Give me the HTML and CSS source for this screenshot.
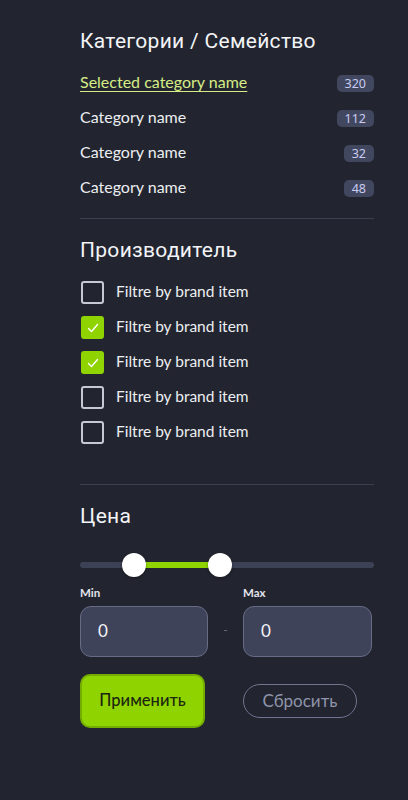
FILE: index.html
```html
<!DOCTYPE html>
<html lang="ru">
<head>
<meta charset="utf-8">
<title>Фильтр</title>
<link rel="stylesheet" href="styles.css">
</head>
<body>
<aside class="panel">
  <section class="section">
    <h2 class="heading">Категории / Семейство</h2>
    <ul class="cats">
      <li class="cat"><a class="cat-name selected" href="#">Selected category name</a><span class="badge">320</span></li>
      <li class="cat"><span class="cat-name">Category name</span><span class="badge">112</span></li>
      <li class="cat"><span class="cat-name">Category name</span><span class="badge">32</span></li>
      <li class="cat"><span class="cat-name">Category name</span><span class="badge">48</span></li>
    </ul>
  </section>
  <hr class="sep sep-1">
  <section class="section">
    <h2 class="heading">Производитель</h2>
    <ul class="brands">
      <li class="brand"><span class="box"></span><span class="brand-name">Filtre by brand item</span></li>
      <li class="brand"><span class="box checked"><svg viewBox="0 0 22 22" width="22" height="22"><path d="M6.5 11.5 L9.5 14.5 L15.5 7.5" fill="none" stroke="#ffffff" stroke-width="1.4" stroke-linecap="round" stroke-linejoin="round"/></svg></span><span class="brand-name">Filtre by brand item</span></li>
      <li class="brand"><span class="box checked"><svg viewBox="0 0 22 22" width="22" height="22"><path d="M6.5 11.5 L9.5 14.5 L15.5 7.5" fill="none" stroke="#ffffff" stroke-width="1.4" stroke-linecap="round" stroke-linejoin="round"/></svg></span><span class="brand-name">Filtre by brand item</span></li>
      <li class="brand"><span class="box"></span><span class="brand-name">Filtre by brand item</span></li>
      <li class="brand"><span class="box"></span><span class="brand-name">Filtre by brand item</span></li>
    </ul>
  </section>
  <hr class="sep sep-2">
  <section class="section">
    <h2 class="heading">Цена</h2>
    <div class="slider">
      <div class="track"></div>
      <div class="range" style="left:54px;width:86px"></div>
      <span class="thumb" style="left:42px"></span>
      <span class="thumb" style="left:128px"></span>
    </div>
    <div class="price-grid">
      <label class="lbl">Min</label>
      <span></span>
      <label class="lbl">Max</label>
      <div class="input">0</div>
      <span class="dash">-</span>
      <div class="input">0</div>
    </div>
    <div class="actions">
      <button class="btn-apply">Применить</button>
      <button class="btn-reset">Сбросить</button>
    </div>
  </section>
</aside>
</body>
</html>
```

FILE: styles.css
```css
* { box-sizing: border-box; }
html, body {
  margin: 0;
  padding: 0;
  background: #22252f;
}
body {
  width: 408px;
  height: 800px;
  font-family: Lato, "Noto Sans", sans-serif;
  color: #eceef2;
}
.panel {
  padding: 28px 34px 0 80px;
}
.heading {
  margin: 0;
  font-family: Roboto, "Noto Sans", sans-serif;
  font-weight: 400;
  font-size: 21px;
  line-height: 26px;
  letter-spacing: 0.3px;
  color: #f3f4f7;
}
ul { list-style: none; margin: 0; padding: 0; }
.cats { margin-top: 12px; }
.cat {
  height: 35px;
  display: flex;
  align-items: center;
  justify-content: space-between;
}
.cat-name {
  font-size: 16px;
  line-height: 20px;
  padding-bottom: 3px;
  color: #eceef2;
  text-decoration: none;
}
.cat-name.selected {
  color: #d6ec86;
  text-decoration: underline;
  text-underline-offset: 3px;
  text-decoration-thickness: 1px;
}
.badge {
  height: 17px;
  padding: 0 8px;
  border-radius: 5px;
  background: #424760;
  color: #c9cbf2;
  font-family: "Noto Sans", sans-serif;
  font-size: 12.5px;
  line-height: 17px;
}
.sep {
  border: 0;
  height: 1px;
  background: #3b3f50;
  margin: 0;
}
.sep-1 { margin-top: 12px; margin-bottom: 18px; }
.sep-2 { margin-top: 34px; margin-bottom: 18px; }
.brands { margin-top: 12px; }
.brand {
  height: 35px;
  display: flex;
  align-items: center;
  gap: 12px;
  padding-left: 1px;
}
.box {
  width: 23px;
  height: 23px;
  border: 2px solid #c6c8d4;
  border-radius: 3px;
  flex: none;
  display: flex;
  align-items: center;
  justify-content: center;
}
.box.checked {
  background: #8fd400;
  border-color: #8fd400;
}
.box svg { flex: none; }
.brand-name {
  font-size: 15.5px;
  line-height: 20px;
  padding-bottom: 3px;
  color: #eceef2;
}
.slider {
  position: relative;
  height: 24px;
  margin-top: 24px;
}
.track {
  position: absolute;
  left: 0;
  right: 0;
  top: 9px;
  height: 6px;
  border-radius: 3px;
  background: #3d4155;
}
.range {
  position: absolute;
  top: 9px;
  height: 6px;
  background: #8fd400;
}
.thumb {
  position: absolute;
  top: 0;
  width: 24px;
  height: 24px;
  border-radius: 50%;
  background: #ffffff;
  box-shadow: 0 1px 3px rgba(0,0,0,0.35);
}
.price-grid {
  margin-top: 9px;
  display: grid;
  grid-template-columns: 128px 35px 129px;
  grid-template-rows: 14px 51px;
  row-gap: 6px;
  align-items: center;
}
.lbl {
  font-size: 11.5px;
  line-height: 14px;
  font-weight: 700;
  color: #e4e6ec;
}
.input {
  height: 51px;
  border: 1px solid #676c86;
  border-radius: 11px;
  background: #3f4359;
  padding-left: 17px;
  padding-bottom: 2px;
  display: flex;
  align-items: center;
  font-size: 17px;
  color: #f4f5f8;
}
.dash {
  text-align: center;
  color: #6d7183;
  font-size: 12px;
  margin-top: -5px;
}
.actions {
  margin-top: 17px;
  display: flex;
  align-items: center;
  gap: 38px;
}
.btn-apply {
  width: 125px;
  height: 54px;
  border: 2px solid #74ad00;
  border-radius: 10px;
  background: #8fd400;
  color: #1c2610;
  font-family: Lato, "Noto Sans", sans-serif;
  font-size: 16.5px;
  font-weight: 500;
  padding: 0 0 2px;
}
.btn-reset {
  width: 114px;
  height: 34px;
  border: 1px solid #6f7490;
  border-radius: 17px;
  background: transparent;
  color: #8f94aa;
  font-family: Lato, "Noto Sans", sans-serif;
  font-size: 17px;
  padding: 0 0 2px;
}
```
